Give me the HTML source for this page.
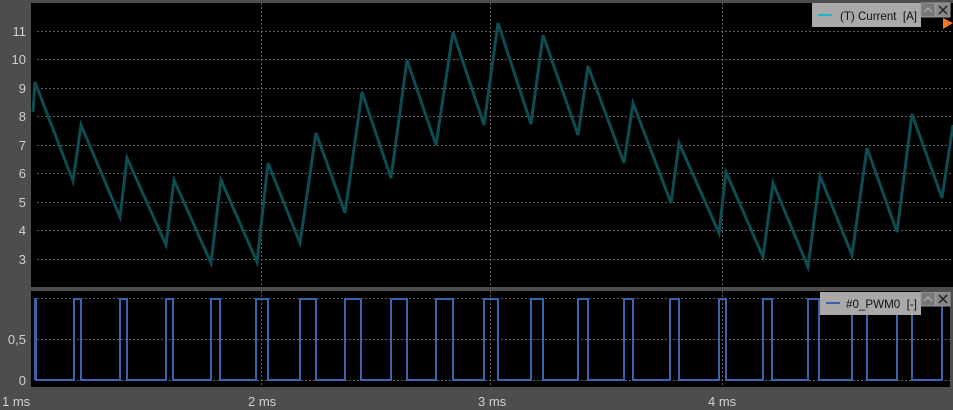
<!DOCTYPE html>
<html><head><meta charset="utf-8"><style>
html,body{margin:0;padding:0;background:#4d4d4d;width:953px;height:410px;overflow:hidden;font-family:"Liberation Sans",sans-serif}
</style></head><body>
<svg width="953" height="410" xmlns="http://www.w3.org/2000/svg" style="position:absolute;left:0;top:0">
<rect x="0" y="0" width="953" height="410" fill="#4d4d4d"/>
<rect x="31" y="3" width="922" height="284" fill="#000"/>
<rect x="31" y="291" width="919" height="96" fill="#000"/>
<g stroke="#5e5e5e" stroke-width="1" stroke-dasharray="2,2" fill="none">
<line x1="37" y1="31.5" x2="953" y2="31.5"/><line x1="37" y1="59.5" x2="953" y2="59.5"/><line x1="37" y1="88.5" x2="953" y2="88.5"/><line x1="37" y1="116.5" x2="953" y2="116.5"/><line x1="37" y1="145.5" x2="953" y2="145.5"/><line x1="37" y1="173.5" x2="953" y2="173.5"/><line x1="37" y1="202.5" x2="953" y2="202.5"/><line x1="37" y1="230.5" x2="953" y2="230.5"/><line x1="37" y1="259.5" x2="953" y2="259.5"/>
<line x1="261.5" y1="3" x2="261.5" y2="287"/><line x1="490.5" y1="3" x2="490.5" y2="287"/><line x1="722.5" y1="3" x2="722.5" y2="287"/>
<line x1="37" y1="298.5" x2="950" y2="298.5"/><line x1="37" y1="339.5" x2="950" y2="339.5"/><line x1="37" y1="380.5" x2="950" y2="380.5"/>
<line x1="261.5" y1="291" x2="261.5" y2="387"/><line x1="490.5" y1="291" x2="490.5" y2="387"/><line x1="722.5" y1="291" x2="722.5" y2="387"/>
</g>
<g fill="#d0d0d0" font-size="13" font-family="Liberation Sans,sans-serif" text-anchor="end">
<text x="26" y="36">11</text><text x="26" y="64">10</text><text x="26" y="93">9</text><text x="26" y="121">8</text><text x="26" y="150">7</text><text x="26" y="178">6</text><text x="26" y="207">5</text><text x="26" y="235">4</text><text x="26" y="264">3</text>
<text x="26" y="344">0,5</text><text x="26" y="385">0</text>
</g>
<g fill="#d0d0d0" font-size="13" font-family="Liberation Sans,sans-serif">
<text x="2" y="406">1 ms</text><text x="248" y="406">2 ms</text><text x="478" y="406">3 ms</text><text x="708" y="406">4 ms</text>
</g>
<polyline fill="none" stroke="#0e4c53" stroke-width="3" stroke-linejoin="miter" points="33,112 35,82 73,181 81,125 120,217 127,158 166,245 174,180 211,263 221,180 257,262 268,163 300,243 316,133 345,213 362,92 391,178 407,60 436,145 453,32 484,125 498,23 531,124 543,35 578,135 588,66 624,163 633,103 671,203 679,143 719,233 726,172 763,257 773,183 808,267 820,176 852,255 867,148 897,232 912,114 942,198 953,125"/>
<polyline fill="none" stroke="#3a63ae" stroke-width="2" points="35,380 35,299 36,299 36,380 74,380 74,299 81,299 81,380 120,380 120,299 127,299 127,380 166,380 166,299 173,299 173,380 211,380 211,299 220,299 220,380 256,380 256,299 268,299 268,380 300,380 300,299 316,299 316,380 345,380 345,299 361,299 361,380 391,380 391,299 407,299 407,380 436,380 436,299 453,299 453,380 484,380 484,299 498,299 498,380 531,380 531,299 543,299 543,380 578,380 578,299 588,299 588,380 624,380 624,299 633,299 633,380 670,380 670,299 679,299 679,380 719,380 719,299 726,299 726,380 763,380 763,299 772,299 772,380 808,380 808,299 819,299 819,380 852,380 852,299 867,299 867,380 897,380 897,299 912,299 912,380 942,380 942,299 949,299"/>
<rect x="812" y="3" width="109" height="24" fill="#a9a9a9"/>
<line x1="818" y1="15" x2="832" y2="15" stroke="#1fb3c8" stroke-width="2"/>
<text x="840" y="20" font-size="12" fill="#111" font-family="Liberation Sans,sans-serif" textLength="77" lengthAdjust="spacingAndGlyphs" xml:space="preserve">(T) Current  [A]</text>
<rect x="921" y="3" width="14" height="14" fill="#777" stroke="#999"/>
<path d="M924 12 L928 8 L932 12" stroke="#bbb" fill="none"/>
<rect x="936" y="3" width="14" height="14" fill="#888" stroke="#999"/>
<path d="M939 6 L947 14 M947 6 L939 14" stroke="#222" stroke-width="1.5"/>
<path d="M943 18 L953 23 L943 29 Z" fill="#f07820"/>
<rect x="820" y="292" width="101" height="23" fill="#a9a9a9"/>
<line x1="826" y1="303" x2="840" y2="303" stroke="#3a63ae" stroke-width="2"/>
<text x="846" y="308" font-size="12" fill="#111" font-family="Liberation Sans,sans-serif" textLength="71" lengthAdjust="spacingAndGlyphs" xml:space="preserve">#0_PWM0  [-]</text>
<rect x="921" y="292" width="14" height="14" fill="#777" stroke="#999"/>
<path d="M924 301 L928 297 L932 301" stroke="#bbb" fill="none"/>
<rect x="936" y="292" width="14" height="14" fill="#888" stroke="#999"/>
<path d="M939 295 L947 303 M947 295 L939 303" stroke="#222" stroke-width="1.5"/>
</svg>
</body></html>
